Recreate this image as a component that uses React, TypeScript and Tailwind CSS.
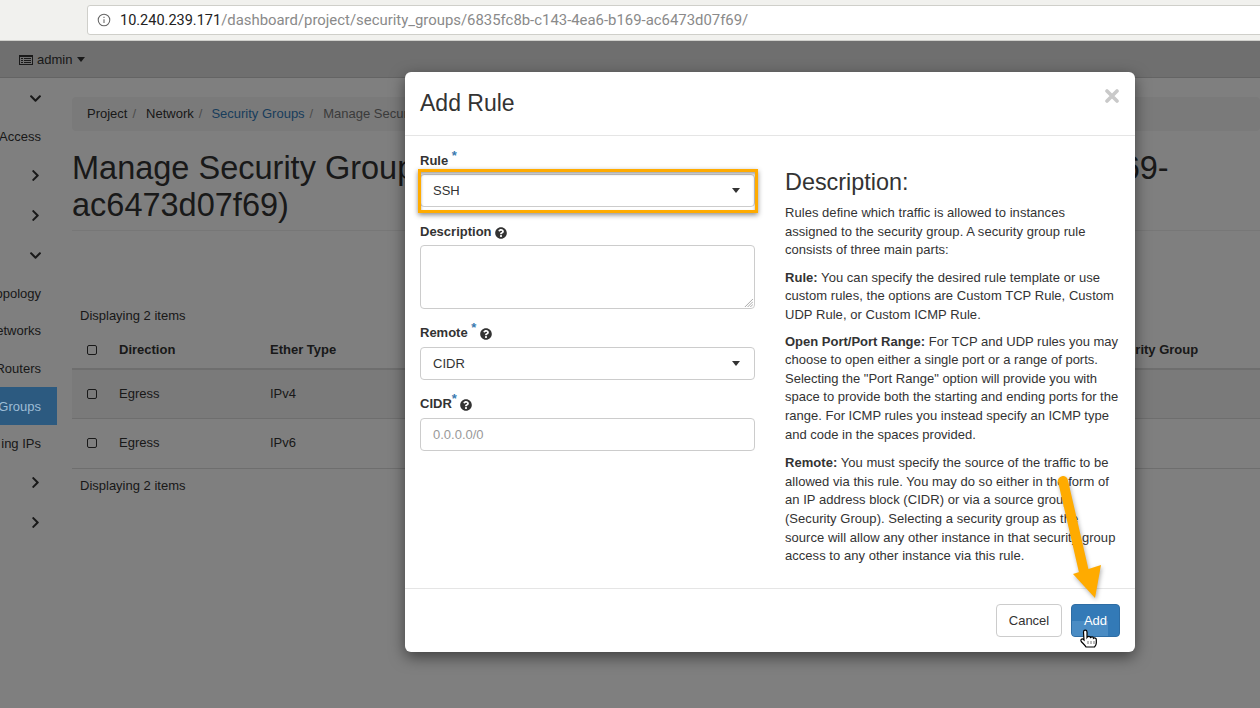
import { FaChevronDown, FaChevronRight, FaQuestionCircle } from "react-icons/fa";

const sideItems = [
  { kind: "down", h: "h-[38px]" },
  { kind: "text", label: "Access", h: "h-[39px]" },
  { kind: "right", h: "h-[39px]" },
  { kind: "right", h: "h-[41px]" },
  { kind: "down", h: "h-[39px]" },
  { kind: "text", label: "opology", h: "h-[37px]" },
  { kind: "text", label: "etworks", h: "h-[37px]" },
  { kind: "text", label: "Routers", h: "h-[38px] pt-[2px]" },
  { kind: "active", label: "Groups", h: "h-[38px] pt-[2px]" },
  { kind: "text", label: "ing IPs", h: "h-[37px]" },
  { kind: "right", h: "h-[40px]" },
  { kind: "right", h: "h-[40px]" },
];

function Help() {
  return <FaQuestionCircle className="inline-block w-[12px] h-[12px] text-[#333]" />;
}

function Req() {
  return <span className="text-[#3a7ab0] text-[13px] font-bold relative -top-[5px]">*</span>;
}

function Caret() {
  return <span className="w-0 h-0 border-x-[4.5px] border-x-transparent border-t-[5px] border-t-[#333]" />;
}

function Row({ ether, shaded }: { ether: string; shaded?: boolean }) {
  return (
    <div className={`flex items-center border-b border-[#ddd] ${shaded ? "h-[49px] bg-[#f5f5f5]" : "h-[50px]"}`}>
      <span className="ml-[15px] w-[10px] h-[10px] border border-[#333] rounded-[2px]" />
      <span className="ml-[22px] w-[151px] shrink-0">Egress</span>
      <span>{ether}</span>
    </div>
  );
}

export default function App() {
  return (
    <div className="relative w-[1260px] h-[708px] overflow-hidden flex flex-col bg-white text-[13px] text-[#333] font-['Liberation_Sans',Arial,sans-serif]">
      <div className="h-[41px] shrink-0 bg-[#f1f1ee] border-b border-[#d0d0cc] pt-[5px] pl-[87px]">
        <div className="h-[30px] w-[1180px] bg-white border border-[#cfcfca] rounded-l-[3px] flex items-center pl-[9px] font-['Roboto',sans-serif] text-[14.9px] text-[#8a8a8a]">
          <svg viewBox="0 0 16 16" className="w-[14px] h-[14px] mr-[9px]" fill="none" stroke="#666" strokeWidth="1.2">
            <circle cx="8" cy="8" r="6.6" />
            <path d="M8 7v4.5M8 4.3v1.4" />
          </svg>
          <span>
            <span className="text-[#222] text-[14.5px]">10.240.239.171</span>/dashboard/project/security_groups/6835fc8b-c143-4ea6-b169-ac6473d07f69/
          </span>
        </div>
      </div>

      <div className="relative flex-1 flex flex-col overflow-hidden">
        <div className="h-[37px] shrink-0 bg-[#dedede] border-b border-[#c8c8c8] flex items-center pl-[19px] pt-[1px]">
          <svg viewBox="0 0 14 12" className="w-[14px] h-[12px] mr-[4px]" fill="#333">
            <path d="M0 1h14v10H0zM1 3v7h12V3zM2 4h2v1H2zm3 0h7v1H5zM2 6h2v1H2zm3 0h7v1H5zM2 8h2v1H2zm3 0h7v1H5z" fillRule="evenodd" />
          </svg>
          <span>admin</span>
          <span className="ml-[5px] flex"><Caret /></span>
        </div>

        <div className="flex-1 flex">
          <div className="w-[57px] shrink-0 pt-[1px]">
            {sideItems.map((item, i) => {
              if (item.kind === "down" || item.kind === "right") {
                return (
                  <div key={i} className={`${item.h} flex items-center justify-end pr-[15px]`}>
                    {item.kind === "down" ? (
                      <FaChevronDown className="w-[13px] h-[13px] text-[#333]" />
                    ) : (
                      <FaChevronRight className="w-[13px] h-[13px] text-[#333]" />
                    )}
                  </div>
                );
              }
              return (
                <div
                  key={i}
                  className={`${item.h} flex items-center justify-end overflow-hidden whitespace-nowrap pr-[16px] ${item.kind === "active" ? "relative z-10 bg-[#2c5a80] text-[#9dbdd6]" : ""}`}
                >
                  {item.label}
                </div>
              );
            })}
          </div>

          <div className="w-[1188px] ml-[15px] shrink-0">
            <div className="mt-[19px] h-[34px] bg-[#f5f5f5] rounded-[4px] flex items-center pl-[15px]">
              <span>Project</span>
              <span className="ml-[5px] mr-[10px] text-[#999]">/</span>
              <span>Network</span>
              <span className="ml-[5px] mr-[9px] text-[#999]">/</span>
              <span className="text-[#337ab7]">Security Groups</span>
              <span className="ml-[5px] mr-[10px] text-[#999]">/</span>
              <span className="text-[#777]">Manage Security Group Rules</span>
            </div>

            <h1 className="mt-[19px] pb-[6px] pr-[68px] border-b border-[#eee] text-[32.5px] leading-[37px] font-normal">
              Manage Security Group Rules: default-group-r2 (6835fc8b-c143-4ea6-b169-ac6473d07f69)
            </h1>

            <p className="mt-[75px] pl-[8px]">Displaying 2 items</p>

            <div className="mt-[6px]">
              <div className="flex items-center h-[38px] border-b-2 border-[#ddd] font-bold">
                <span className="ml-[15px] w-[10px] h-[10px] border border-[#333] rounded-[2px]" />
                <span className="ml-[22px] w-[151px] shrink-0">Direction</span>
                <span className="w-[783px] shrink-0">Ether Type</span>
                <span className="whitespace-nowrap">Remote Security Group</span>
              </div>
              <Row ether="IPv4" shaded />
              <Row ether="IPv6" />
            </div>

            <p className="mt-[7px] pl-[8px]">Displaying 2 items</p>
          </div>
        </div>

        <div className="absolute inset-0 bg-black/50" />
      </div>

      <div className="absolute left-[405px] top-[72px] w-[730px] h-[580px] bg-white rounded-[6px] shadow-[0_5px_15px_rgba(0,0,0,0.5)] flex flex-col">
        <div className="h-[64px] shrink-0 border-b border-[#e5e5e5] flex items-center justify-between pl-[15px] pr-[16px]">
          <h2 className="text-[23px] leading-none font-normal">Add Rule</h2>
          <svg viewBox="0 0 14 14" className="w-[14px] h-[14px] -mt-[16px]" stroke="#c9c9c9" strokeWidth="3.6" strokeLinecap="round">
            <path d="M2 2l10 10M12 2 2 12" />
          </svg>
        </div>

        <div className="flex-1 flex px-[15px]">
          <div className="w-[335px] shrink-0">
            <label className="block mt-[14px] h-[21px] font-bold leading-[21px]">Rule <Req /></label>
            <div className="mt-[3px] h-[33px] border border-[#ccc] rounded-[4px] flex items-center justify-between pl-[12px] pr-[14px]">
              <span>SSH</span>
              <Caret />
            </div>

            <label className="block mt-[14px] h-[21px] font-bold leading-[21px]">Description <Help /></label>
            <div className="relative mt-[3px] h-[64px] border border-[#ccc] rounded-[4px]">
              <svg viewBox="0 0 10 10" className="absolute right-[1px] bottom-[1px] w-[9px] h-[9px]" stroke="#888" strokeWidth="0.8">
                <path d="M1 10 10 1M4 10l6-6M7 10l3-3" />
              </svg>
            </div>

            <label className="block mt-[13px] h-[21px] font-bold leading-[21px]">Remote <Req /> <Help /></label>
            <div className="mt-[4px] h-[33px] border border-[#ccc] rounded-[4px] flex items-center justify-between pl-[12px] pr-[14px]">
              <span>CIDR</span>
              <Caret />
            </div>

            <label className="block mt-[13px] h-[21px] font-bold leading-[21px]">CIDR<Req /> <Help /></label>
            <div className="mt-[4px] h-[33px] border border-[#ccc] rounded-[4px] flex items-center pl-[12px] text-[#999]">
              0.0.0.0/0
            </div>
          </div>

          <div className="ml-[30px] w-[335.5px] leading-[18.6px] tracking-[0.04px]">
            <h3 className="mt-[33px] text-[23.4px] leading-[26px] font-normal mb-[9px] tracking-normal">Description:</h3>
            <p>Rules define which traffic is allowed to instances assigned to the security group. A security group rule consists of three main parts:</p>
            <p className="mt-[9px]"><b>Rule:</b> You can specify the desired rule template or use custom rules, the options are Custom TCP Rule, Custom UDP Rule, or Custom ICMP Rule.</p>
            <p className="mt-[8px] tracking-normal"><b>Open Port/Port Range:</b> For TCP and UDP rules you may choose to open either a single port or a range of ports. Selecting the "Port Range" option will provide you with space to provide both the starting and ending ports for the range. For ICMP rules you instead specify an ICMP type and code in the spaces provided.</p>
            <p className="mt-[10px]"><b>Remote:</b> You must specify the source of the traffic to be allowed via this rule. You may do so either in the form of an IP address block (CIDR) or via a source group (Security Group). Selecting a security group as the source will allow any other instance in that security group access to any other instance via this rule.</p>
          </div>
        </div>

        <div className="h-[64px] shrink-0 border-t border-[#e5e5e5] flex items-center justify-end gap-[9px] pr-[15px]">
          <div className="w-[66px] h-[33px] border border-[#ccc] rounded-[4px] flex items-center justify-center">Cancel</div>
          <div className="relative w-[49px] h-[33px] bg-[#337ab7] border border-[#2e6da4] rounded-[4px] overflow-hidden flex items-center justify-center text-white">
            <span className="absolute left-0 bottom-0 w-[36px] h-[15px] bg-[#4a8cc4]" />
            <span className="relative">Add</span>
          </div>
        </div>
      </div>

      <div className="absolute left-[418px] top-[169px] w-[340px] h-[44px] border-[3px] border-[#ffab00] shadow-[0_2px_5px_rgba(0,0,0,0.45),inset_0_2px_3px_rgba(0,0,0,0.35)]" />

      <svg viewBox="0 0 1260 708" className="absolute left-0 top-0 w-[1260px] h-[708px] pointer-events-none">
        <g className="drop-shadow-[1px_2px_2px_rgba(0,0,0,0.3)]">
          <path d="M1063 481 1084 572" stroke="#ffab00" strokeWidth="10" strokeLinecap="round" fill="none" />
          <path d="M1073 574 1101 565 1095 598z" fill="#ffab00" />
        </g>
        <path
          d="M1083.500 632c0-2.500 3.500-2.500 3.500 0v5.500c1-1.500 3-1.500 3.500 0 1-1 3-1 3 .8 1-.8 2.800 0 2.800 1.200v3.500c0 2-.8 3-1.800 4h-8.500c-1-1.800-3-3.500-4.800-5.500-1.200-2 1-3.500 2.300-2l.5 .5z"
          fill="#fff"
          stroke="#000"
          strokeWidth="1.200"
        />
        <path d="M1088 641v3M1091 641v3M1094 641v3" stroke="#555" strokeWidth="0.8" />
      </svg>
    </div>
  );
}
